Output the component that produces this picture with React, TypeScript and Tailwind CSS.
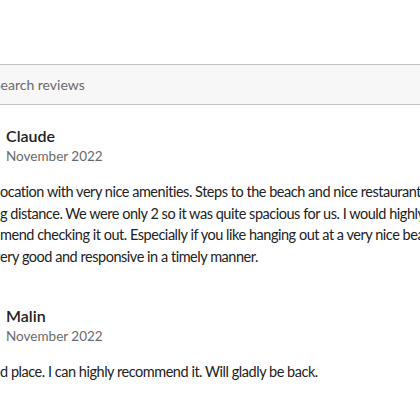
import { Search } from 'lucide-react';

interface Review {
  name: string;
  date: string;
  // each line: [part hidden past the left edge, visible part]
  lines: [string, string][];
}

const reviews: Review[] = [
  {
    name: 'Claude',
    date: 'November 2022',
    lines: [
      ['Great l', 'ocation with very nice amenities. Steps to the beach and nice restaurants within'],
      ['walkin', 'g distance. We were only 2 so it was quite spacious for us. I would highly'],
      ['recom', 'mend checking it out. Especially if you like hanging out at a very nice beach.'],
      ['Host v', 'ery good and responsive in a timely manner.'],
    ],
  },
  {
    name: 'Malin',
    date: 'November 2022',
    lines: [['A goo', 'd place. I can highly recommend it. Will gladly be back.']],
  },
];

function ReviewItem({ review }: { review: Review }) {
  return (
    <div className="flex flex-col">
      <div className="flex items-center gap-3">
        <div className="h-9 w-9 rounded-full bg-gray-300" />
        <div className="flex flex-col">
          <span className="text-[16px] leading-[20px] font-semibold text-[#222222]">{review.name}</span>
          <span className="text-[13.5px] leading-[20px] text-[#6a6a6a]">{review.date}</span>
        </div>
      </div>
      <div className="mt-[15px] text-[14.5px] leading-[21.7px] tracking-[-0.47px] text-[#222222] whitespace-nowrap">
        {review.lines.map(([head, rest], i) => (
          <div key={i} className="flex">
            <span className="flex w-[42px] shrink-0 justify-end">{head}</span>
            <span>{rest}</span>
          </div>
        ))}
      </div>
    </div>
  );
}

export default function App() {
  return (
    <div className="w-[420px] h-[420px] overflow-hidden bg-white font-['Lato',sans-serif]">
      <div className="-ml-[42px] w-[540px] pt-[64px]">
        <div className="flex items-center h-[41px] border border-[#c2c2c2] bg-[#f7f7f7] rounded-lg pl-[9px]">
          <Search className="h-4 w-4 text-[#222222] mr-[9px]" strokeWidth={2.5} />
          <span className="text-[14px] text-[#6a6a6a]">Search reviews</span>
        </div>
        <div className="flex flex-col gap-[38px] pt-[21px]">
          {reviews.map((r) => (
            <ReviewItem key={r.name} review={r} />
          ))}
        </div>
      </div>
    </div>
  );
}
